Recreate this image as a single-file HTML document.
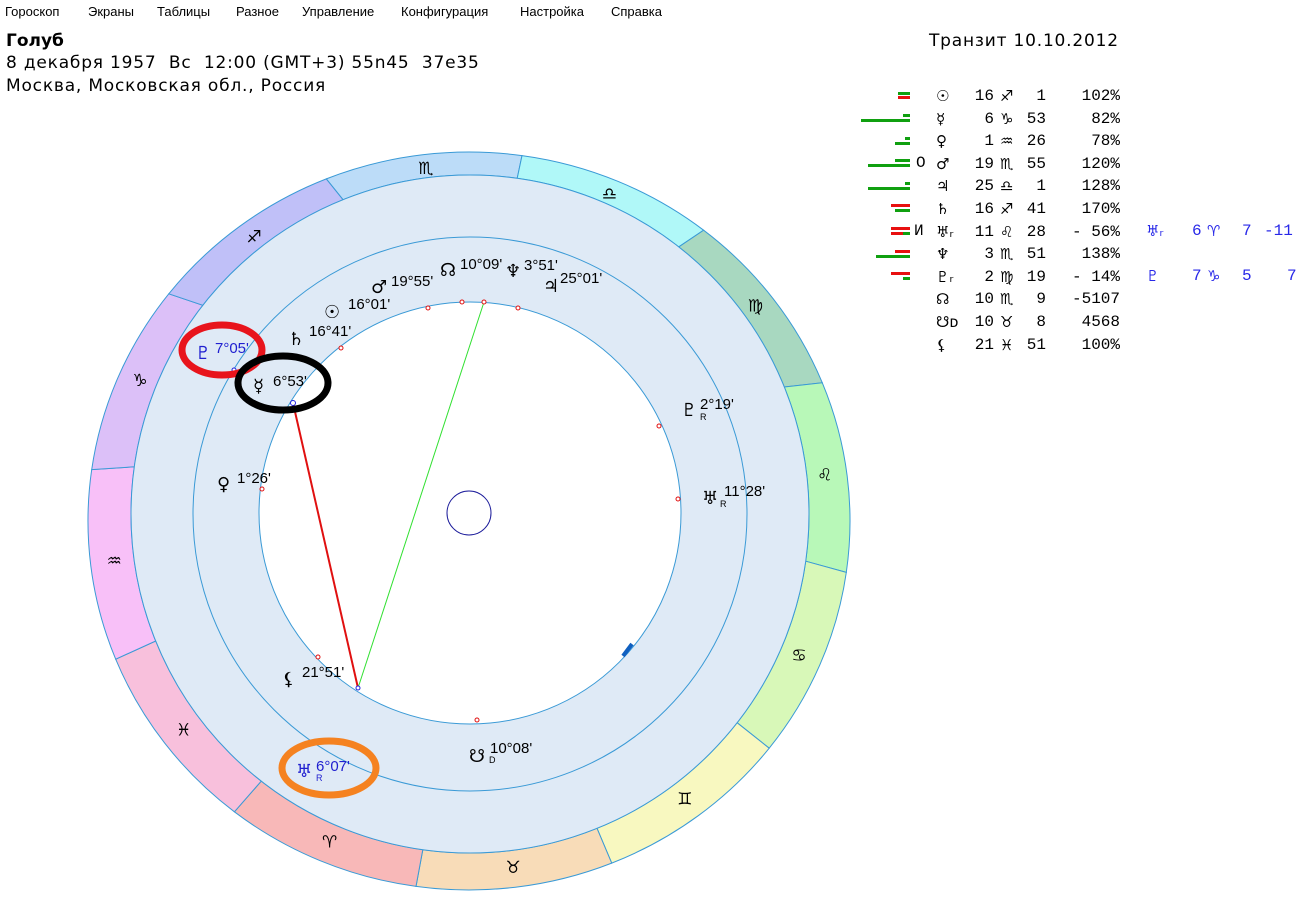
<!DOCTYPE html>
<html><head><meta charset="utf-8"><style>
body{margin:0;width:1298px;height:920px;background:#fff;overflow:hidden;position:relative;font-family:"Liberation Sans","DejaVu Sans",sans-serif;}
.menu{position:absolute;top:0;left:0;height:22px;font-size:13px;}
.menu span{position:absolute;top:4px;white-space:nowrap}
.h{position:absolute;font-size:17px;white-space:nowrap;color:#000;font-family:"DejaVu Sans",sans-serif;letter-spacing:0.8px}
.t{position:absolute;font-family:"Liberation Mono","DejaVu Sans Mono",monospace;font-size:16px;white-space:nowrap;color:#000}
.b{position:absolute;height:3px}
.g{background:#10a010}.r{background:#e81010}
</style></head><body>
<div class="menu">
<span style="left:5px">Гороскоп</span><span style="left:88px">Экраны</span><span style="left:157px">Таблицы</span><span style="left:236px">Разное</span><span style="left:302px">Управление</span><span style="left:401px">Конфигурация</span><span style="left:520px">Настройка</span><span style="left:611px">Справка</span>
</div>
<div class="h" style="left:6px;top:31px;font-weight:bold;letter-spacing:0">Голуб</div>
<div class="h" style="left:6px;top:53px">8 декабря 1957&nbsp; Вс&nbsp; 12:00 (GMT+3) 55n45&nbsp; 37e35</div>
<div class="h" style="left:6px;top:76px">Москва, Московская обл., Россия</div>
<div class="h" style="left:929px;top:31px">Транзит 10.10.2012</div>

<svg width="1298" height="920" style="position:absolute;left:0;top:0" xmlns="http://www.w3.org/2000/svg">
<g id="zod"></g>
<circle cx="470" cy="514" r="339" fill="#dfeaf6" stroke="#3a9ad6" stroke-width="1"/>
<circle cx="470" cy="514" r="277" fill="none" stroke="#3a9ad6" stroke-width="1"/>
<circle cx="470" cy="513" r="211" fill="#fff" stroke="#3a9ad6" stroke-width="1"/>
<circle cx="469" cy="513" r="22" fill="none" stroke="#1a1a9a" stroke-width="1"/>
<line x1="293" y1="403" x2="358" y2="688" stroke="#e01010" stroke-width="2"/>
<line x1="484" y1="302" x2="358" y2="688" stroke="#30e030" stroke-width="1"/>
<line x1="623" y1="656" x2="632" y2="644" stroke="#1060c0" stroke-width="4"/>
<g fill="#fff" stroke="#e01010" stroke-width="1">
<circle cx="428" cy="308" r="2"/><circle cx="462" cy="302" r="2"/><circle cx="484" cy="302" r="2"/><circle cx="518" cy="308" r="2"/><circle cx="341" cy="348" r="2"/><circle cx="659" cy="426" r="2"/><circle cx="678" cy="499" r="2"/><circle cx="262" cy="489" r="2"/><circle cx="318" cy="657" r="2"/><circle cx="477" cy="720" r="2"/>
</g>
<g fill="#fff" stroke="#2020e0" stroke-width="1"><circle cx="293" cy="403" r="2.5"/><circle cx="358" cy="688" r="2"/><circle cx="234" cy="370" r="2"/></g>
<g font-family="'DejaVu Sans',sans-serif" font-size="18" fill="#000">
<text x="371" y="293">♂</text><text x="440" y="276">☊</text><text x="505" y="277">♆</text><text x="543" y="292">♃</text>
<text x="324" y="318">☉</text><text x="288" y="345">♄</text><text x="253" y="392">☿</text><text x="681" y="416">♇</text>
<text x="217" y="490">♀</text><text x="702" y="504">♅</text><text x="282" y="685">⚸</text><text x="469" y="762">☋</text>
<text x="195" y="359" fill="#2020d0">♇</text><text x="296" y="777" fill="#2020d0">♅</text>
</g>
<g font-family="'Liberation Sans',sans-serif" font-size="15" fill="#000">
<text x="391" y="286">19°55'</text><text x="460" y="269">10°09'</text><text x="524" y="270">3°51'</text><text x="560" y="283">25°01'</text>
<text x="348" y="309">16°01'</text><text x="309" y="336">16°41'</text><text x="273" y="386">6°53'</text><text x="700" y="409">2°19'</text>
<text x="237" y="483">1°26'</text><text x="724" y="496">11°28'</text><text x="302" y="677">21°51'</text><text x="490" y="753">10°08'</text>
<text x="215" y="353" fill="#2020d0">7°05'</text><text x="316" y="771" fill="#2020d0">6°07'</text>
<text x="700" y="420" font-size="9">R</text><text x="720" y="507" font-size="9">R</text><text x="489" y="763" font-size="9">D</text><text x="316" y="781" font-size="9" fill="#2020d0">R</text>
</g>
<ellipse cx="222" cy="350" rx="40" ry="25" fill="none" stroke="#e8141c" stroke-width="7"/>
<ellipse cx="283" cy="383" rx="45" ry="27" fill="none" stroke="#000" stroke-width="7"/>
<ellipse cx="329" cy="768" rx="47" ry="27" fill="none" stroke="#f58220" stroke-width="7"/>
</svg>
<script>
(function(){
var g=document.getElementById('zod');var cx=469,cy=521,RX=381,RY=369,icx=470,icy=514,r=339;
var cols=['#bcdcf8','#b0f8f8','#a8d8c0','#b8f8b8','#d8f8b8','#f8f8c0','#f8dcb8','#f8b8b8','#f8c0dc','#f8c0f8','#dcc0f8','#c0c0f8'];
var sy=['♏','♎','♍','♌','♋','♊','♉','♈','♓','♒','♑','♐'];
var s='';
function po(a){return [(cx+RX*Math.cos(a)).toFixed(1),(cy-RY*Math.sin(a)).toFixed(1)];}
function pi(a){return [(icx+r*Math.cos(a)).toFixed(1),(icy-r*Math.sin(a)).toFixed(1)];}
for(var i=0;i<12;i++){
var a1=(112-30*i)*Math.PI/180,a2=(82-30*i)*Math.PI/180;
var A=po(a1),B=po(a2),C=pi(a2),D=pi(a1);
s+='<path d="M'+A+' A'+RX+' '+RY+' 0 0 1 '+B+' L'+C+' A'+r+' '+r+' 0 0 0 '+D+' Z" fill="'+cols[i]+'" stroke="#3a9ad6" stroke-width="1"/>';
var m=(97-30*i)*Math.PI/180;
var mx=(cx+icx)/2+358*Math.cos(m),my=(cy+icy)/2-352*Math.sin(m);
s+='<text x="'+mx.toFixed(1)+'" y="'+(my+6).toFixed(1)+'" text-anchor="middle" font-family="DejaVu Sans,sans-serif" font-size="17" fill="#000">'+sy[i]+'</text>';
}
g.innerHTML=s;
})();
</script>

<div class="b g" style="left:898px;top:92px;width:12px"></div><div class="b r" style="left:898px;top:96px;width:12px"></div>
<div class="b g" style="left:903px;top:114px;width:7px"></div><div class="b g" style="left:861px;top:119px;width:49px"></div>
<div class="b g" style="left:905px;top:137px;width:5px"></div><div class="b g" style="left:895px;top:142px;width:15px"></div>
<div class="b g" style="left:895px;top:159px;width:15px"></div><div class="b g" style="left:868px;top:164px;width:42px"></div>
<div class="b g" style="left:905px;top:182px;width:5px"></div><div class="b g" style="left:868px;top:187px;width:42px"></div>
<div class="b r" style="left:891px;top:204px;width:19px"></div><div class="b g" style="left:895px;top:209px;width:15px"></div>
<div class="b r" style="left:891px;top:227px;width:19px"></div><div class="b r" style="left:891px;top:232px;width:12px"></div><div class="b g" style="left:903px;top:232px;width:7px"></div>
<div class="b r" style="left:895px;top:250px;width:15px"></div><div class="b g" style="left:876px;top:255px;width:34px"></div>
<div class="b r" style="left:891px;top:272px;width:19px"></div><div class="b g" style="left:903px;top:277px;width:7px"></div>

<div class="t" style="left:916px;top:154px">O</div><div class="t" style="left:914px;top:222px">И</div>
<div id="tbl"></div>
<script>
(function(){
var rows=[['☉','16','♐','1','102%'],['☿','6','♑','53','82%'],['♀','1','♒','26','78%'],['♂','19','♏','55','120%'],['♃','25','♎','1','128%'],['♄','16','♐','41','170%'],['♅ᵣ','11','♌','28','- 56%'],['♆','3','♏','51','138%'],['♇ᵣ','2','♍','19','- 14%'],['☊','10','♏','9','-5107'],['☋ᴅ','10','♉','8','4568'],['⚸','21','♓','51','100%']];
var h='';
for(var i=0;i<rows.length;i++){var y=87+i*22.6;var R=rows[i];
h+='<div class="t" style="left:936px;top:'+y+'px;font-family:DejaVu Sans,sans-serif;font-size:15px">'+R[0]+'</div>';
h+='<div class="t" style="right:'+(1298-994)+'px;top:'+y+'px">'+R[1]+'</div>';
h+='<div class="t" style="left:1000px;top:'+y+'px;font-family:DejaVu Sans,sans-serif;font-size:15px">'+R[2]+'</div>';
h+='<div class="t" style="right:'+(1298-1046)+'px;top:'+y+'px">'+R[3]+'</div>';
h+='<div class="t" style="right:'+(1298-1120)+'px;top:'+y+'px">'+R[4]+'</div>';}
var b='color:#2828e8;';
h+='<div class="t" style="'+b+'left:1146px;top:222px;font-family:DejaVu Sans,sans-serif;font-size:15px">♅ᵣ</div><div class="t" style="'+b+'left:1192px;top:222px">6</div><div class="t" style="'+b+'left:1207px;top:222px;font-family:DejaVu Sans,sans-serif;font-size:15px">♈</div><div class="t" style="'+b+'left:1242px;top:222px">7</div><div class="t" style="'+b+'left:1264px;top:222px">-11</div>';
h+='<div class="t" style="'+b+'left:1146px;top:267px;font-family:DejaVu Sans,sans-serif;font-size:15px">♇</div><div class="t" style="'+b+'left:1192px;top:267px">7</div><div class="t" style="'+b+'left:1207px;top:267px;font-family:DejaVu Sans,sans-serif;font-size:15px">♑</div><div class="t" style="'+b+'left:1242px;top:267px">5</div><div class="t" style="'+b+'left:1287px;top:267px">7</div>';
document.getElementById('tbl').innerHTML=h;
})();
</script>
</body></html>
